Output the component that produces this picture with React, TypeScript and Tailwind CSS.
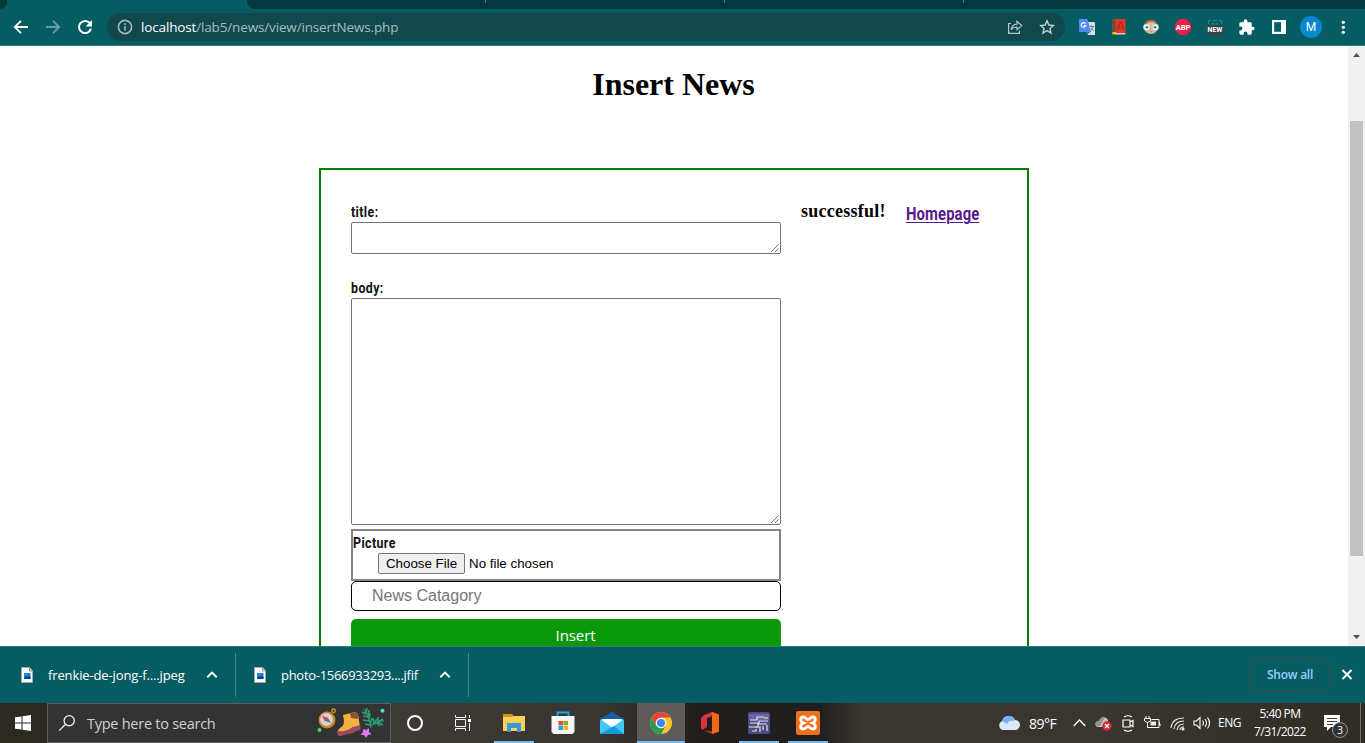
import React from "react";

const ui = "font-['Open_Sans','Noto_Sans',sans-serif]";

function BrowserToolbar() {
  return (
    <header className={`shrink-0 ${ui}`}>
      <div className="flex h-[9px] bg-[#055c62]">
        <div className="h-[9px] w-[7px] rounded-br-[7px] bg-[#03383d]" />
        <div className="w-[240px]" />
        <div className="flex h-[9px] flex-1 rounded-bl-[8px] bg-[#03383d]">
          <div className="h-[3px] w-[239px] border-r border-[#4b7c80]" />
          <div className="h-[3px] w-[239px] border-r border-[#4b7c80]" />
          <div className="h-[3px] w-[239px] border-r border-[#4b7c80]" />
        </div>
      </div>
      <div className="flex h-[37px] items-center border-b border-[#38787d] bg-[#055c62] pl-[13px]">
        <svg className="mr-4 size-4" viewBox="0 0 16 16" fill="none" stroke="#fff" strokeWidth="1.9">
          <path d="M15 8H2.2M8 1.8 1.8 8 8 14.2" />
        </svg>
        <svg className="mr-4 size-4" viewBox="0 0 16 16" fill="none" stroke="#6a9da1" strokeWidth="1.9">
          <path d="M1 8h12.8M8 1.8 14.2 8 8 14.2" />
        </svg>
        <svg className="size-4" viewBox="0 0 16 16" fill="none" stroke="#fff" strokeWidth="2">
          <path d="M12.9 4.2A6.1 6.1 0 1 0 14 9.6" />
          <path d="M15 1v6.4H8.6z" fill="#fff" stroke="none" />
        </svg>
        <div className="ml-[14px] flex h-7 w-[958px] items-center rounded-full bg-[#10484e] pl-[10px]">
          <svg className="size-4" viewBox="0 0 16 16" fill="none" stroke="#a3babd" strokeWidth="1.6">
            <circle cx="8" cy="8" r="6.6" />
            <path d="M8 7v4.6M8 4.2v1.7" />
          </svg>
          <div className="ml-2 w-[866px] whitespace-nowrap text-[13.5px] leading-5 tracking-[-0.15px] text-[#a5bec0]">
            <span className="text-white">localhost</span>/lab5/news/view/insertNews.php
          </div>
          <svg className="size-4" viewBox="0 0 16 16" fill="none" stroke="#b5c8ca" strokeWidth="1.2">
            <path d="M4 4.5H1.6v9.8h10.8v-2.8M4.2 10.5C5 6.7 7 5.2 10 5.1V2.4l4.7 4.2L10 10.7V8C7.500 8 5.600 8.800 4.200 10.500z" />
          </svg>
          <svg className="ml-4 size-4" viewBox="0 0 16 16" fill="none" stroke="#c1d0d1" strokeWidth="1.4">
            <path d="m8 1.800 1.850 4.250 4.600.4-3.500 3.050 1.050 4.500L8 11.600 4 14l1.050-4.500-3.500-3.050 4.600-.4z" />
          </svg>
        </div>
        <div className="ml-[14px] flex items-center gap-4">
          <svg className="size-4" viewBox="0 0 16 16">
            <path d="M7 3h8.200l.8 1v12H9z" fill="#d8dce0" />
            <path d="M8 16l3-3H7z" fill="#3367d6" />
            <path d="M1 0h7.500L12 13H1a1 1 0 0 1-1-1V1a1 1 0 0 1 1-1z" fill="#4f8df5" />
            <path d="M6.500 4.800A2.300 2.300 0 1 0 6.700 6.600H4.700" stroke="#fff" strokeWidth="1.100" fill="none" />
            <path d="M10.500 7.500H15M12.500 6.500v1M14 7.500c-.4 2-1.500 3-2.500 3.800M12 9l2.500 3" stroke="#6a7b8f" fill="none" />
          </svg>
          <svg className="size-4" viewBox="0 0 16 16">
            <path d="M1.500 0h13v14H4l-2.500 1z" fill="#dd3a2a" />
            <path d="M1.500 0h3v14h-3z" fill="#754c39" />
            <path d="M4 14h10.500v1.500H4z" fill="#e8c9be" />
            <path d="M1.500 13h3.500v3l-1.700-1-1.800 1z" fill="#f2b632" />
            <path d="m6.500 11 2.800-8h.7l2.800 8M7.500 8.500h4.300" stroke="#b5251b" strokeWidth="1.200" fill="none" />
          </svg>
          <svg className="size-4" viewBox="0 0 16 16">
            <ellipse cx="8" cy="8" rx="6.800" ry="7" fill="#e4b891" />
            <path d="M1.200 7C1.200 3 4 1 8 1s6.800 2 6.800 6L12 4.500H4z" fill="#a56b42" />
            <path d="M5 3.500Q8 2 12 3.800v3H4z" fill="#e4b891" />
            <circle cx="3.700" cy="8.300" r="3.200" fill="#edfafa" stroke="#b8cdcf" strokeWidth=".8" />
            <circle cx="12.300" cy="8.300" r="3.200" fill="#edfafa" stroke="#b8cdcf" strokeWidth=".8" />
            <circle cx="4" cy="8.300" r="1.300" fill="#477982" />
            <circle cx="12" cy="8.300" r="1.300" fill="#477982" />
            <path d="M6.500 12.700h3" stroke="#c07862" strokeWidth=".8" />
          </svg>
          <div className="flex size-4 items-center justify-center bg-[#f01e46] font-['Roboto',sans-serif] text-[7px] font-black leading-none text-white [clip-path:polygon(30%_0,70%_0,100%_30%,100%_70%,70%_100%,30%_100%,0_70%,0_30%)]">
            <span className="translate-y-[0.500px] scale-x-105 scale-y-[1.100]">ABP</span>
          </div>
          <div className="flex h-4 w-4 flex-col">
            <svg className="h-[6px] w-4" viewBox="0 0 16 6" fill="none" stroke="#128c98">
              <path d="M1.500 5V1.500H4M6 1.500h4M12 1.500h2.500V5M5 6l1-2 1.500 2M9 6l1-2 1 2" />
            </svg>
            <div className="flex h-[10px] items-center justify-center bg-[#3e4144] font-['Roboto',sans-serif] text-[7px] font-bold leading-none text-white">
              <span className="inline-block scale-y-110">NEW</span>
            </div>
          </div>
          <svg className="size-4" viewBox="1.500 .5 22 22" fill="#fff">
            <path d="M20.500 11H19V7a2 2 0 0 0-2-2h-4V3.500a2.500 2.500 0 0 0-5 0V5H4a2 2 0 0 0-2 2v3.800h1.500a2.700 2.700 0 0 1 0 5.400H2V20a2 2 0 0 0 2 2h3.800v-1.500a2.700 2.700 0 0 1 5.400 0V22H17a2 2 0 0 0 2-2v-4h1.500a2.500 2.500 0 0 0 0-5z" />
          </svg>
          <svg className="size-4" viewBox="0 0 16 16">
            <path d="M1 1h14v14H1z" fill="#fff" />
            <path d="M3.200 3.200H10v9.600H3.200z" fill="#055c62" />
          </svg>
        </div>
        <div className="ml-[13px] flex size-[22px] items-center justify-center rounded-full bg-[#0788d1] font-['Roboto',sans-serif] text-[12px] text-white">M</div>
        <svg className="ml-[13px] size-4" viewBox="0 0 16 16" fill="#fff">
          <circle cx="8.300" cy="3.300" r="1.600" />
          <circle cx="8.300" cy="8.300" r="1.600" />
          <circle cx="8.300" cy="13.300" r="1.600" />
        </svg>
      </div>
    </header>
  );
}

function Grip() {
  return (
    <svg className="size-[11px]" viewBox="0 0 11 11" stroke="#626262" strokeWidth="0.9">
      <path d="M2 10 9.500 2.500M6 10 9.500 6.500" />
    </svg>
  );
}

function NarrowText({ children }: { children: string }) {
  return (
    <span className="inline-block origin-left scale-x-[0.8] whitespace-nowrap align-top font-['Roboto',sans-serif] text-[15.5px] font-bold leading-5 tracking-[0.500px] text-[#111]">
      {children}
    </span>
  );
}

function NewsPage() {
  return (
    <main className="flex h-[600px] shrink-0 overflow-hidden bg-white">
      <div className="flex w-[1348px] flex-col items-center">
        <h1 className="mt-5 h-[102px] shrink-0 pr-px font-['Liberation_Serif',serif] text-[32px] font-bold leading-[37px] text-black">Insert News</h1>
        <div className="flex h-[520px] w-[710px] shrink-0 border-2 border-[#008000] pl-[30px]">
          <form className="flex w-[430px] flex-col pt-8">
            <label className="h-5"><NarrowText>title:</NarrowText></label>
            <div className="flex h-8 shrink-0 items-end justify-end rounded-[2px] border border-[#767676]"><Grip /></div>
            <label className="mt-6 h-5"><NarrowText>body:</NarrowText></label>
            <div className="flex h-[227px] shrink-0 items-end justify-end rounded-[2px] border border-[#767676]"><Grip /></div>
            <div className="mt-1 h-[52px] shrink-0 border-2 border-[#858585]">
              <div className="h-[22px] pt-[2px]"><NarrowText>Picture</NarrowText></div>
              <div className="ml-[25px] flex items-center font-['Liberation_Sans',sans-serif] text-[13.333px] leading-4 text-black">
                <span className="flex h-[21px] w-[87px] items-center justify-center whitespace-nowrap rounded-[2px] border border-[#767676] bg-[#efefef]">Choose File</span>
                <span className="ml-1">No file chosen</span>
              </div>
            </div>
            <div className="flex h-[30px] shrink-0 items-center rounded-[5px] border border-black pl-5 font-['Liberation_Sans',sans-serif] text-[16px] text-[#757575]">News Catagory</div>
            <div className={`mt-2 flex h-[34px] shrink-0 items-center justify-center rounded-[5px] bg-[#0b990b] pb-[2px] pl-[19px] text-[15px] tracking-[-0.1px] text-white ${ui}`}>Insert</div>
          </form>
          <strong className="ml-5 mt-[30px] w-[105px] font-['Liberation_Serif',serif] text-[18px] leading-[22px] tracking-[0.25px] text-black">successful!</strong>
          <a className="mt-[32px] inline-block h-6 origin-left scale-x-[0.78] font-['Roboto',sans-serif] text-[19px] font-bold leading-6 tracking-[0.150px] text-[#551a8b] underline decoration-1 underline-offset-2">Homepage</a>
        </div>
      </div>
      <div className="flex w-[17px] flex-col items-center bg-[#f1f1f1]">
        <svg className="h-[17px] w-[17px] shrink-0" viewBox="0 0 17 17"><path d="M5 11h7l-3.500-4z" fill="#505050" /></svg>
        <div className="mt-[58px] h-[435px] w-[13px] shrink-0 bg-[#c1c1c1]" />
        <svg className="mt-auto h-[17px] w-[17px] shrink-0" viewBox="0 0 17 17"><path d="M5 6h7l-3.500 4z" fill="#505050" /></svg>
      </div>
    </main>
  );
}

function DownloadItem({ name, textWidth }: { name: string; textWidth: string }) {
  return (
    <div className="flex h-11 items-center border-r border-[#488287] pr-4">
      <svg className="ml-[20px] h-4 w-[14px]" viewBox="0 0 14 16">
        <path d="M1.500.5h8L12.500 4v11.500h-11z" fill="#fafafa" stroke="#a5aaae" />
        <path d="M9.500.5V4h3" fill="#d1d6da" stroke="#92979b" />
        <path d="M4 6h6.500v6H4z" fill="#2386d5" />
        <path d="m4 11 2-2 1.500 1L9 8l1.500 2v2H4z" fill="#123f82" />
      </svg>
      <span className={`ml-[14px] whitespace-nowrap text-[13px] leading-5 text-white ${textWidth}`}>{name}</span>
      <svg className="size-[14px]" viewBox="0 0 14 14" fill="none" stroke="#f2ffff" strokeWidth="1.900"><path d="M2.300 9.200 7 4.600l4.700 4.600" /></svg>
    </div>
  );
}

function Downloads() {
  return (
    <section className={`flex h-[57px] shrink-0 items-center border-t border-[#38787d] bg-[#055c62] ${ui}`}>
      <DownloadItem name="frenkie-de-jong-f....jpeg" textWidth="w-[157px] tracking-[-0.130px]" />
      <div className="-ml-[3px] flex"><DownloadItem name="photo-1566933293....jfif" textWidth="w-[157px] tracking-[-0.290px]" /></div>
      <div className="ml-auto flex h-8 w-[78px] items-center justify-center rounded-[4px] border border-[#394b50] pb-px text-[12px] font-semibold tracking-[-0.25px] text-[#9bccff]">Show all</div>
      <svg className="ml-3 mr-3 size-3" viewBox="0 0 12 12" stroke="#fff" strokeWidth="2"><path d="m1.500 1 9 9m0-9-9 9" /></svg>
    </section>
  );
}

function SearchArt() {
  return (
    <svg className="h-8 w-[70px]" viewBox="0 0 70 32">
      <circle cx="10" cy="13" r="8.500" fill="#c8861c" />
      <circle cx="9.500" cy="12.500" r="6.500" fill="#d9cfd5" />
      <path d="m5 9 6 2 3 5-6-2z" fill="#6d717f" /><path d="m5 9 6 2-3 3z" fill="#d94256" />
      <circle cx="16.500" cy="3.800" r="1.800" fill="none" stroke="#d19a25" strokeWidth="1.300" />
      <circle cx="2.500" cy="23" r="2" fill="#4ad675" />
      <path d="m26 8 12-3 3 2 2 13-7 5-14 4q-3-5 1-8 6-2 3-13z" fill="#f5b041" />
      <path d="m33 6 6-1 2 2v5l-7-1z" fill="#8d5134" />
      <path d="M20.500 24q10 1 15-4l8-2v5l-4 1-3 2-14 3q-3-1-2-5z" fill="#9d4867" />
      <path d="M47 2q6 8 7 19M53 20q4-6 14-6" stroke="#258766" strokeWidth="1.300" fill="none" />
      <path d="m45 5 4 2 1-6M46 9l5 1 1-7M46 13l6 1 1-8M48 17l5 1 2-7M56 11l1 5 3-4M56 17l4-1 3 3M61 10l0 5 5-3M61 15l5 3" stroke="#2d9b75" strokeWidth="1.600" fill="none" />
      <circle cx="65.500" cy="3.800" r="2" fill="#5bd4e5" />
      <path d="m46 22 3 1 3-2v4l2.500 2-3.500 1-2 3-2-3-3.500 0 2.500-3z" fill="#df7aed" />
    </svg>
  );
}

function TaskApp({ children, mode = "none" }: { children: React.ReactNode; mode?: "none" | "open" | "active" }) {
  const surface = mode === "active" ? "ml-px w-12 bg-[#5c5b59]" : "w-[49px]";
  const line = mode === "none" ? "bg-transparent" : "bg-[#76b9ed]";
  return (
    <div className={`flex h-10 flex-col items-center ${surface}`}>
      <div className="flex h-[38px] items-center justify-center pt-[2px]">{children}</div>
      <div className={`h-[2px] ${mode === "active" ? "w-full" : "w-10"} ${line}`} />
    </div>
  );
}

function Taskbar() {
  return (
    <footer className={`flex h-10 shrink-0 items-center bg-[linear-gradient(90deg,#2b2920_0px,#2b2920_47px,#3d3a36_400px,#393632_600px,#201e1d_700px,#211f1e_820px,#39352f_860px,#39362f_1100px,#302d25_1365px)] text-white ${ui}`}>
      <div className="flex w-[47px] justify-center">
        <svg className="-ml-px h-4 w-4" viewBox="0 0 16 16" fill="#fff"><path d="M0 2.300 6.500 1.400v6.100H0zM7.500 1.300 16 0v7.500H7.500zM0 8.500h6.500v6.100L0 13.700zM7.500 8.500H16V16l-8.500-1.300z" /></svg>
      </div>
      <div className="flex h-10 w-[344px] items-center border border-[#5e5e5e] bg-[#333]">
        <svg className="ml-[10px] size-[18px]" viewBox="0 0 18 18" fill="none" stroke="#f1f1f1" strokeWidth="1.300"><circle cx="11.200" cy="6.700" r="5.100" /><path d="m7.500 10.300-6.300 6.300" /></svg>
        <span className="ml-[11px] w-[230px] whitespace-nowrap pt-px text-[14.500px] tracking-[-0.260px] text-[#d1d1d1]">Type here to search</span>
        <SearchArt />
      </div>
      <div className="flex w-12 justify-center"><div className="size-4 rounded-full border-[2px] border-white" /></div>
      <div className="flex w-12 justify-center">
        <svg className="h-4 w-[18px]" viewBox="0 0 18 16" fill="none" stroke="#f4f4f4" strokeWidth="1"><path d="M1.500 0v2.500h10V0M1.500 4.500h10v7h-10zM1.500 16v-2.500h10V16M15.500 0v3M15.500 8v8" /><path d="M14 4h3v3h-3z" fill="#fff" stroke="none" /></svg>
      </div>
      <div className="ml-[2px] flex">
        <TaskApp mode="open"><svg className="h-[18px] w-[22px]" viewBox="0 0 22 18"><path d="M0 0h9l1 2h12v15H0z" fill="#ffd057" /><path d="M0 0h9l1 2-1 1H0z" fill="#d99010" /><path d="M4 9h14v9h-4v-4H8v4H4z" fill="#3999dd" /></svg></TaskApp>
        <TaskApp><svg className="h-6 w-6" viewBox="0 0 24 24"><path d="M6.500 6V1.500h11V6" fill="none" stroke="#16a9ef" strokeWidth="1.800" /><path d="M.5 5h23v16l-2 2h-19l-2-2z" fill="#f5f5f5" /><path d="M7.500 10H12v4H7.500z" fill="#e94e21" /><path d="M12.500 10H17v4h-4.500z" fill="#7bb51d" /><path d="M7.500 14.500H12V19H7.500z" fill="#1ba2e8" /><path d="M12.500 14.500H17V19h-4.500z" fill="#fbb71b" /></svg></TaskApp>
        <TaskApp><svg className="h-[22px] w-6" viewBox="0 0 24 22"><path d="M0 7 12 0l12 7v15H0z" fill="#1261a7" /><path d="M2 7h20v9H2z" fill="#fff" /><path d="m0 7 12 8.500L24 7v15H0z" fill="#41c6f5" /><path d="m0 22 14-8 10 8z" fill="#169adb" /></svg></TaskApp>
        <TaskApp mode="active"><svg className="h-[22px] w-[22px]" viewBox="0 0 22 22"><circle cx="11" cy="11" r="11" fill="#fbc529" /><path d="M1.500 5.500A11 11 0 0 1 20.500 5.500H11L6.200 13.800z" fill="#e84439" /><path d="M1.500 5.500A11 11 0 0 0 11 22l4.800-8.300H6.200z" fill="#279c4e" /><circle cx="11" cy="11" r="5.300" fill="#fff" /><circle cx="11" cy="11" r="4.100" fill="#4386ec" /></svg></TaskApp>
        <TaskApp><svg className="h-[22px] w-[18px]" viewBox="0 0 18 22"><path d="m11 0 7 2.500v17L11 22l-8-3.500 8 .8z" fill="#c92a2a" /><path d="M11 0v4L6 6v9l-5 3-1-2V6l3-3z" fill="#d9323b" /><path d="M11 0 18 2.500v17L11 22z" fill="#f06a13" /></svg></TaskApp>
        <TaskApp mode="open"><svg className="size-[22px]" viewBox="0 0 22 22"><rect width="22" height="22" rx="2" fill="#4b4c83" /><path d="M1 2h20v6H1z" fill="#6668a3" /><path d="M2 8h7V5h7M2 11h9v-2h9M1 15h9v-3h9M4 19h4v-2M12 14v6M15 14v4M19 13v6" stroke="#e0e1f4" strokeWidth="1.200" fill="none" /><path d="M16 6h4M7 15h4" stroke="#e9b775" strokeWidth="1.400" /></svg></TaskApp>
        <TaskApp mode="open"><svg className="size-6" viewBox="0 0 24 24"><rect width="24" height="24" rx="2" fill="#ed7220" /><path d="M7.500 12C3.500 10.500 4 6 7.500 6c2.500 0 2.500 2.500 4.500 2.500S14 6 16.500 6c3.500 0 4 4.500 0 6 4 1.500 3.500 6 0 6-2.500 0-2.500-2.500-4.500-2.500S10 18 7.500 18c-3.500 0-4-4.500 0-6z" fill="none" stroke="#fff" strokeWidth="2.800" /></svg></TaskApp>
      </div>
      <div className="ml-auto flex h-10 w-[368px] items-center">
        <svg className="h-4 w-[23px]" viewBox="0 0 23 16"><path d="M5 15a5 5 0 0 1 0-9 7 7 0 0 1 13-1 5 5 0 0 1 0 10z" fill="#d9eafa" /><path d="M5 6a7 7 0 0 1 13-1l-2 1a5 5 0 0 0-6 3z" fill="#79b0f0" /></svg>
        <span className="ml-[9px] w-11 whitespace-nowrap text-[14px] tracking-[-0.500px]">89°F</span>
        <svg className="h-3 w-[13px]" viewBox="0 0 13 12" fill="none" stroke="#fff" strokeWidth="1.300"><path d="m.7 9 5.800-6 5.800 6" /></svg>
        <svg className="ml-[9px] h-[16px] w-[17px]" viewBox="0 0 17 16"><path d="M3 12a3 3 0 0 1 1-6 5 5 0 0 1 9-1v7z" fill="#c3c3c3" /><path d="M0 9a4 4 0 0 1 4-3 5 5 0 0 1 6-4L5 11H2z" fill="#929292" /><circle cx="12" cy="11" r="4.700" fill="#d92831" /><path d="m10 9 4 4m0-4-4 4" stroke="#fff" strokeWidth="1.400" /></svg>
        <svg className="ml-[10px] h-[17px] w-3" viewBox="0 0 12 17" fill="none" stroke="#fff" strokeWidth="1.200"><path d="M2 2Q6-.5 10 2M2 15q4 2.500 8 0M1 5h7v7H1zM8 7l3-1.500v6L8 10" /></svg>
        <svg className="ml-[10px] h-4 w-[17px]" viewBox="0 0 17 16" fill="none" stroke="#fff" strokeWidth="1"><path d="M2 1v2.500M5 1v2.500M.5 3.500h6V6l-3 1.500-3-1.500zM3.500 7v5.500H15v-8H7.500M15.500 7v3H17" /><path d="M6.500 6.500H12v4H6.500z" fill="#eee" stroke="none" /></svg>
        <svg className="ml-[9px] h-4 w-[15px]" viewBox="0 0 15 16" fill="none" stroke="#e9e9e9" strokeWidth="1.100"><path d="M1 13Q2 3 14 3M4 14Q5 6 14 6M7 15q1-6 7-6M10 15q0-3 4-3" /><circle cx="13" cy="14" r="1" fill="#fff" /></svg>
        <svg className="ml-2 h-4 w-[17px]" viewBox="0 0 17 16" fill="none" stroke="#fff" strokeWidth="1.100"><path d="M1 6h2.500L7 2.500v11L3.500 10H1zM9.500 5.500q2 2.500 0 5M12 4q3 4 0 8M14.500 2.500q4 5.500 0 11" /></svg>
        <span className="ml-[8px] w-[34px] whitespace-nowrap text-[12px] tracking-[-0.500px]">ENG</span>
        <div className="w-[56px] whitespace-nowrap text-center text-[12px] leading-[18px] tracking-[-0.550px]"><div>5:40 PM</div><div>7/31/2022</div></div>
        <div className="relative ml-4 size-6">
          <svg className="mt-[3px] h-[18px] w-[17px]" viewBox="0 0 17 18"><path d="M0 1h16v12H7l-4 4v-4H0z" fill="#fff" /><path d="M3 4.500h10M3 7.500h10M3 10.500h6" stroke="#403e38" /></svg>
          <span className="absolute left-[8px] top-[11px] flex size-4 items-center justify-center rounded-full border border-[#999] bg-[#303336] text-[10px] leading-none">3</span>
        </div>
        <div className="ml-auto h-10 w-[5px] border-l border-[#77746e]" />
      </div>
    </footer>
  );
}

export default function App() {
  return (
    <div className="flex h-[743px] w-[1365px] flex-col overflow-hidden bg-white">
      <BrowserToolbar />
      <NewsPage />
      <Downloads />
      <Taskbar />
    </div>
  );
}
